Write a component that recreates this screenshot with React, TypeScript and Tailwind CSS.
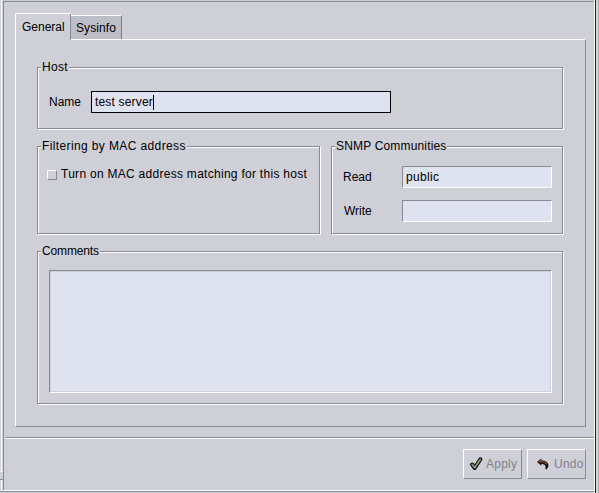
import type { ReactNode } from 'react';

function Group({ title, titleClass, className, children }: { title: string; titleClass: string; className: string; children?: ReactNode }) {
  return (
    <section className={`relative border border-[#888a98] shadow-[1px_1px_0_#fff,inset_1px_1px_0_#fff] ${className}`}>
      <h2 className={`absolute -top-[9px] left-[3px] h-[16px] whitespace-nowrap bg-[#cfcfd8] pl-px leading-[16px] ${titleClass}`}>{title}</h2>
      {children}
    </section>
  );
}

function Field({ value }: { value: string }) {
  return (
    <div className="h-[22px] w-[150px] border border-t-[#888a98] border-l-[#888a98] border-r-white border-b-white bg-[#dfe2ef] pl-[3px] leading-[20px] tracking-[0.35px]">
      {value}
    </div>
  );
}

function CheckIcon() {
  return (
    <svg width="13" height="14" viewBox="0 0 13 14" fill="none" strokeLinejoin="round" strokeLinecap="round">
      <path d="M2.2 7.5L4.7 11L10.3 2.3" stroke="#0b100c" strokeWidth="4" />
      <path d="M2.3 7.6L4.7 10.8L10.2 2.5" stroke="#829879" strokeWidth="1.9" />
    </svg>
  );
}

function UndoIcon() {
  return (
    <svg width="12" height="12" viewBox="0 0 12 12" fill="none">
      <path d="M0 4L4.3 .4V2.6C8.3 2.5 11.2 4.4 11.4 7.2C11.5 8.8 10.8 10.2 9.2 11.4L8.2 10.8C9.4 8 8 6 4.5 5.9V7.7Z" fill="#17110f" />
      <path d="M2 3.9L3.5 2.9V3.8C6.5 3.6 8.7 4.4 9.7 6.1" stroke="#8a5644" strokeWidth="1.2" />
    </svg>
  );
}

function ActionButton({ icon, label, className }: { icon: ReactNode; label: string; className: string }) {
  return (
    <button className={`flex h-[30px] w-[59px] items-center border border-t-white border-l-white border-r-[#888a98] border-b-[#888a98] text-[#81818b] ${className}`}>
      {icon}
      <span className="leading-[16px] tracking-[0.25px]">{label}</span>
    </button>
  );
}

export default function App() {
  return (
    <div className="flex h-[493px] w-[599px] overflow-hidden bg-[#cfcfd8] text-black [font-family:'Liberation_Sans',Arial,sans-serif] text-[12px]">
      <div className="flex w-[3px] shrink-0 flex-col">
        <div className="ml-px h-[471px] w-px shrink-0 bg-white" />
        <div className="h-[9px] shrink-0 border-y border-t-white border-b-[#888a98]" />
        <div className="ml-px h-[11px] w-px bg-white" />
        <div className="mt-auto h-[2px] border-t border-[#888a98]" />
      </div>
      <main className="flex w-[591px] shrink-0 flex-col pt-px">
        <div className="flex h-[489px] shrink-0 flex-col border-t border-l border-[#888a98]">
          <nav className="ml-[11px] mt-[11px] flex h-[26px] shrink-0 items-end">
            <div className="relative z-10 -mb-px h-[27px] w-[56px] border-t border-l border-white bg-[#cfcfd8] pl-[6px] leading-[26px] shadow-[inset_-1px_0_0_#888a98]">General</div>
            <div className="h-[24px] w-[51px] border-t border-r border-t-white border-r-[#777a89] bg-[#bebec8] pl-[5px] leading-[24px] tracking-[0.1px]">Sysinfo</div>
          </nav>
          <div className="ml-[11px] h-[388px] w-[571px] shrink-0 border border-t-white border-l-white border-r-[#888a98] border-b-[#888a98] pt-[27px] pl-[21px]">
            <Group title="Host" titleClass="w-[28px] tracking-[0.3px]" className="flex h-[62px] w-[526px] pt-[23px] pl-[11px]">
              <span className="w-[42px] leading-[22px]">Name</span>
              <div className="flex h-[22px] w-[300px] items-center border border-black bg-[#dfe2ef] pl-[3px] tracking-[0.17px]">
                test server<span className="h-[15px] w-px bg-black" />
              </div>
            </Group>
            <div className="mt-[17px] flex gap-[11px]">
              <Group title="Filtering by MAC address" titleClass="w-[146px] tracking-[0.38px]" className="h-[88px] w-[283px] pt-[19px] pl-[9px]">
                <label className="flex h-[16px] items-center">
                  <span className="mt-[2px] mr-[4px] size-[10px] border border-t-white border-l-white border-r-[#888a98] border-b-[#888a98]" />
                  <span className="whitespace-nowrap leading-[16px] tracking-[0.28px]">Turn on MAC address matching for this host</span>
                </label>
              </Group>
              <Group title="SNMP Communities" titleClass="w-[112px] tracking-[0.17px]" className="flex h-[88px] w-[232px] flex-col gap-[12px] pt-[19px] pl-[11px]">
                <div className="flex h-[22px]"><span className="w-[59px] leading-[22px]">Read</span><Field value="public" /></div>
                <div className="flex h-[22px]"><span className="w-[59px] pl-px leading-[22px]">Write</span><Field value="" /></div>
              </Group>
            </div>
            <Group title="Comments" titleClass="w-[59px] tracking-[-0.15px]" className="mt-[17px] h-[153px] w-[526px] pt-[18px] pl-[11px]">
              <div className="h-[123px] w-[503px] border border-t-[#888a98] border-l-[#888a98] border-r-white border-b-white bg-[#dfe2ef] shadow-[inset_1px_1px_0_#cfcfda,inset_-1px_-1px_0_#cfcfda]" />
            </Group>
          </div>
          <div className="ml-px mt-[10px] h-[2px] w-[589px] shrink-0 border-t border-b border-t-[#888a98] border-b-white" />
          <footer className="ml-[459px] mt-[10px] flex gap-[5px]">
            <ActionButton className="pl-[6px] [&>span]:ml-[3px]" icon={<CheckIcon />} label="Apply" />
            <ActionButton className="pl-[9px] [&>span]:ml-[5px]" icon={<UndoIcon />} label="Undo" />
          </footer>
        </div>
        <div className="h-[2px] shrink-0 border-t border-b border-t-white border-b-[#888a98]" />
      </main>
      <div className="flex w-[5px] shrink-0">
        <div className="w-px bg-white" />
        <div className="w-px bg-[#202026]" />
        <div className="w-[2px] bg-[#d6d6d6]" />
        <div className="w-px bg-[#aaaead]" />
      </div>
    </div>
  );
}
